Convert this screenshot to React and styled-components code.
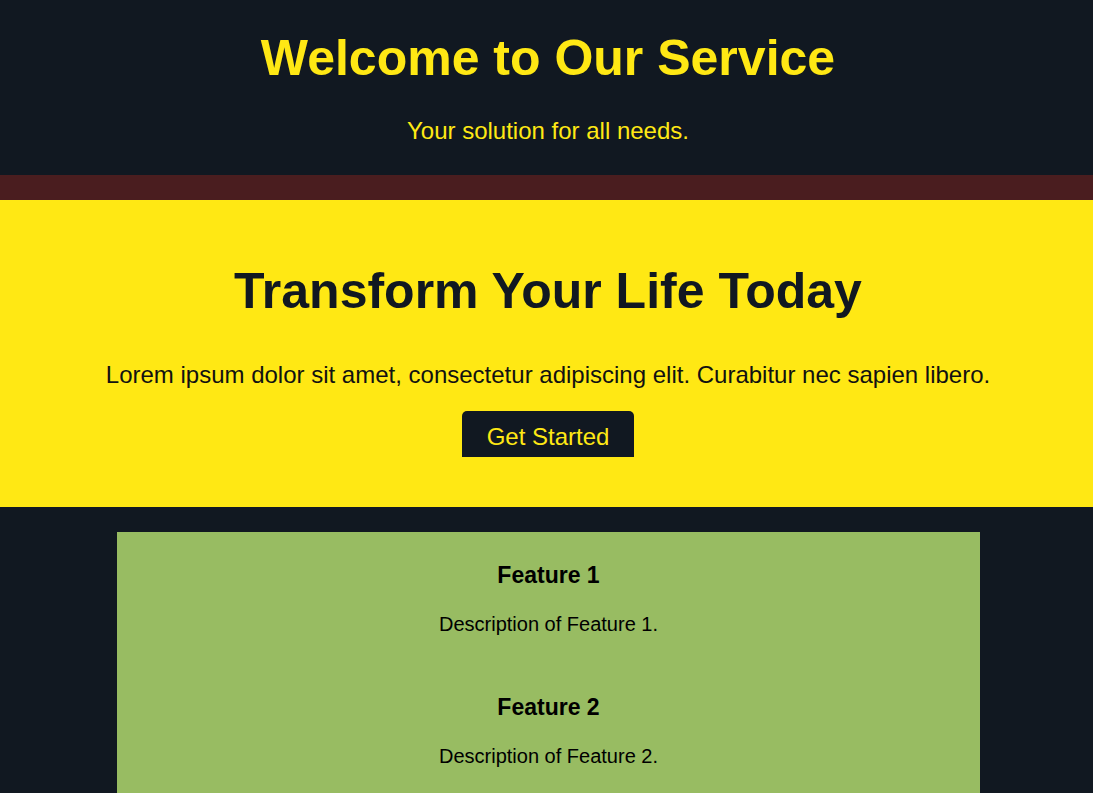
import React from 'react';
import styled, { createGlobalStyle } from 'styled-components';

const GlobalStyle = createGlobalStyle`
  html, body {
    margin: 0;
    padding: 0;
    background: #111821;
  }
  body {
    font-family: 'Liberation Sans', Arial, sans-serif;
  }
`;

const Header = styled.header`
  background: #111821;
  color: #ffe814;
  text-align: center;
  padding: 30px 17px 30px 20px;

  h1 {
    margin: 0;
    font-size: 50px;
    line-height: 57px;
    font-weight: bold;
  }

  p {
    margin: 30px 0 0;
    font-size: 24px;
    line-height: 28px;
  }
`;

const Strip = styled.div`
  height: 25px;
  background: #4a1d1f;
`;

const Hero = styled.section`
  background: #ffe814;
  color: #111821;
  text-align: center;
  padding: 63px 17px 50px 20px;

  h2 {
    margin: 0;
    font-size: 50px;
    line-height: 57px;
    font-weight: bold;
  }

  p {
    margin: 41px 0 0;
    font-size: 24px;
    line-height: 28px;
    color: #111;
  }
`;

const Button = styled.button`
  display: block;
  box-sizing: border-box;
  margin: 22px auto 0;
  width: 172px;
  height: 46px;
  padding: 12px 0 6px;
  border: none;
  border-radius: 5px 5px 0 0;
  background: #111821;
  color: #ffe814;
  font-family: inherit;
  font-size: 24px;
  line-height: 28px;
  cursor: pointer;
`;

const Main = styled.main`
  padding: 25px 113px 0 117px;
`;

const Features = styled.div`
  background: #98bc62;
  padding: 30px 20px 20px;
  text-align: center;
  color: #000;
`;

const Feature = styled.div`
  & + & {
    margin-top: 58px;
  }

  h3 {
    margin: 0;
    font-size: 23px;
    line-height: 26px;
    font-weight: bold;
  }

  p {
    margin: 24px 0 0;
    font-size: 20px;
    line-height: 24px;
  }
`;

const features = [
  { title: 'Feature 1', text: 'Description of Feature 1.' },
  { title: 'Feature 2', text: 'Description of Feature 2.' },
  { title: 'Feature 3', text: 'Description of Feature 3.' },
];

export default function App() {
  return (
    <>
      <GlobalStyle />
      <Header>
        <h1>Welcome to Our Service</h1>
        <p>Your solution for all needs.</p>
      </Header>
      <Strip />
      <Hero>
        <h2>Transform Your Life Today</h2>
        <p>Lorem ipsum dolor sit amet, consectetur adipiscing elit. Curabitur nec sapien libero.</p>
        <Button>Get Started</Button>
      </Hero>
      <Main>
        <Features>
          {features.map((f) => (
            <Feature key={f.title}>
              <h3>{f.title}</h3>
              <p>{f.text}</p>
            </Feature>
          ))}
        </Features>
      </Main>
    </>
  );
}
